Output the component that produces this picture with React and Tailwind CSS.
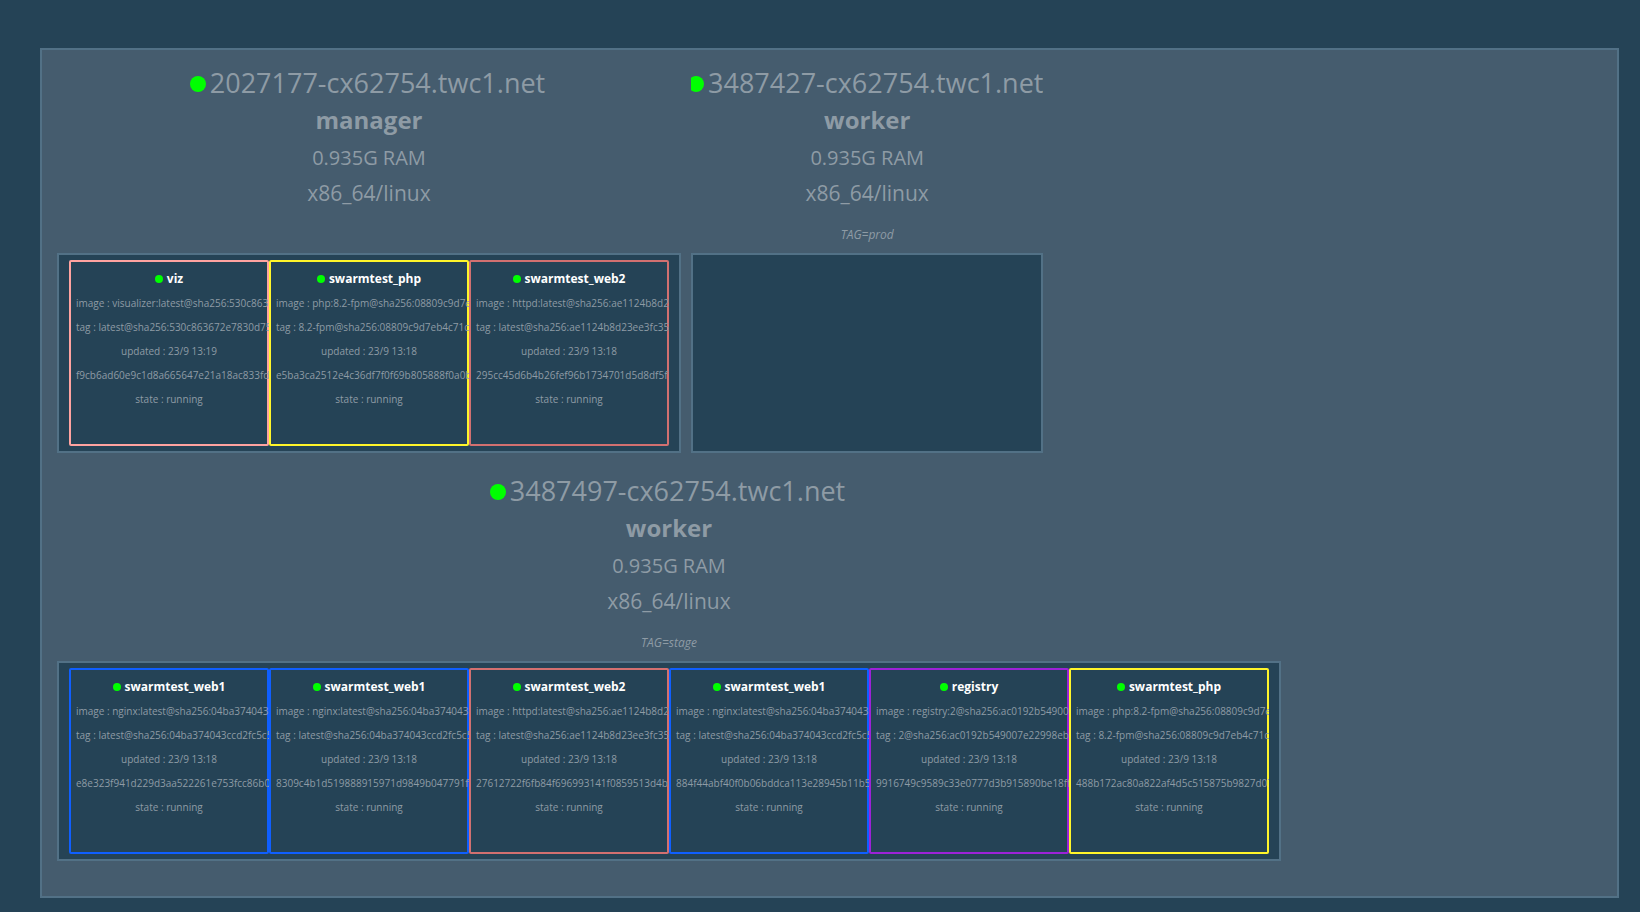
import React from "react";

const PHP = {
  name: "swarmtest_php",
  border: "border-[#fff52a]",
  image: "php:8.2-fpm@sha256:08809c9d7eb4c71c",
  tag: "8.2-fpm@sha256:08809c9d7eb4c71c",
};
const WEB1 = {
  name: "swarmtest_web1",
  border: "border-[#0f5fff]",
  image: "nginx:latest@sha256:04ba374043ccd2fc5c5",
  tag: "latest@sha256:04ba374043ccd2fc5c5",
};
const WEB2 = {
  name: "swarmtest_web2",
  border: "border-[#d27070]",
  image: "httpd:latest@sha256:ae1124b8d23ee3fc35",
  tag: "latest@sha256:ae1124b8d23ee3fc35",
};
const VIZ = {
  name: "viz",
  border: "border-[#ffa3a0]",
  image: "visualizer:latest@sha256:530c863672e7830d75",
  tag: "latest@sha256:530c863672e7830d75",
};
const REGISTRY = {
  name: "registry",
  border: "border-[#9c22d8]",
  image: "registry:2@sha256:ac0192b549007e22998eb",
  tag: "2@sha256:ac0192b549007e22998eb7",
};

const nodes = [
  {
    host: "2027177-cx62754.twc1.net",
    role: "manager",
    label: "",
    tasks: [
      { service: VIZ, updated: "23/9 13:19", id: "f9cb6ad60e9c1d8a665647e21a18ac833fd" },
      { service: PHP, updated: "23/9 13:18", id: "e5ba3ca2512e4c36df7f0f69b805888f0a0b" },
      { service: WEB2, updated: "23/9 13:18", id: "295cc45d6b4b26fef96b1734701d5d8df5f" },
    ],
  },
  {
    host: "3487427-cx62754.twc1.net",
    role: "worker",
    label: "TAG=prod",
    tasks: [],
  },
  {
    host: "3487497-cx62754.twc1.net",
    role: "worker",
    label: "TAG=stage",
    tasks: [
      { service: WEB1, updated: "23/9 13:18", id: "e8e323f941d229d3aa522261e753fcc86b0" },
      { service: WEB1, updated: "23/9 13:18", id: "8309c4b1d519888915971d9849b047791f" },
      { service: WEB2, updated: "23/9 13:18", id: "27612722f6fb84f696993141f0859513d4b" },
      { service: WEB1, updated: "23/9 13:18", id: "884f44abf40f0b06bddca113e28945b11b5" },
      { service: REGISTRY, updated: "23/9 13:18", id: "9916749c9589c33e0777d3b915890be18ff" },
      { service: PHP, updated: "23/9 13:18", id: "488b172ac80a822af4d5c515875b9827d07" },
    ],
  },
];

const Task = ({ service, updated, id }) => {
  return (
    <li className="w-[200px] shrink-0 overflow-hidden">
      <div className={`h-full rounded-xs border-2 p-[5px] text-center ${service.border}`}>
        <h3 className="flex items-center justify-center gap-1 text-xs leading-6 font-bold text-white">
          <span className="size-2 rounded-full bg-[#00ff00]" />
          {service.name}
        </h3>
        <div className="text-[10px] leading-6 whitespace-nowrap">
          <p>image : {service.image}</p>
          <p>tag : {service.tag}</p>
          <p>updated : {updated}</p>
          <p>{id}</p>
          <p>state : running</p>
        </div>
      </div>
    </li>
  );
};

const Node = ({ host, role, label, tasks }) => {
  return (
    <section className="shrink-0 overflow-hidden">
      {/* Node info */}
      <div className="text-center whitespace-nowrap">
        <h2 className="flex items-center justify-center text-[27px] leading-10">
          {/* the dot hangs a little out of the line */}
          <span className="mt-0.5 mr-1 -ml-[3px] size-4 shrink-0 rounded-full bg-[#00ff00]" />
          {host}
        </h2>
        <p className="text-2xl leading-[34px] font-bold">{role}</p>
        <p className="text-xl leading-[42px]">0.935G RAM</p>
        <p className="text-[21px] leading-7">x86_64/linux</p>
        <p className="h-[46px] pt-4 text-xs leading-6 italic">{label}</p>
      </div>
      {/* Running tasks */}
      <ul className="flex h-[200px] border-2 border-[#527186] bg-[#254356] px-[10px] py-[5px]">
        {tasks.map((task) => (
          <Task key={task.id} {...task} />
        ))}
      </ul>
    </section>
  );
};

const App = () => {
  return (
    <div className="min-h-screen bg-[#254356] pt-12 pr-[21px] pb-3 pl-10 font-['Open_Sans',sans-serif] text-[#8e9ba5]">
      <main className="flex flex-wrap gap-x-[10px] gap-y-[18px] border-2 border-[#527186] bg-[#455c6e] px-[15px] pt-[13px] pb-[35px]">
        {nodes.map((node) => (
          <Node key={node.host} {...node} />
        ))}
      </main>
    </div>
  );
};

export default App;
